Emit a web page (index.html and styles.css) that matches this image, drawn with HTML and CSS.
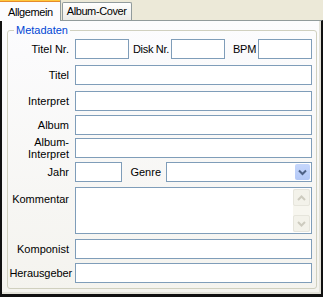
FILE: index.html
```html
<!DOCTYPE html>
<html lang="de">
<head>
  <meta charset="UTF-8" />
  <title>Tag-Editor</title>
  <link rel="stylesheet" href="styles.css">
</head>
<body>

<div class="tabs">
  <div class="tab active">Allgemein</div>
  <div class="tab">Album-Cover</div>
</div>

<div class="page">
  <fieldset class="group">
    <legend>Metadaten</legend>
    <div class="form">
      <div class="lbl">Titel Nr.</div>
      <div class="nums">
        <div class="field"></div>
        <div class="lbl">Disk Nr.</div>
        <div class="field"></div>
        <div class="lbl">BPM</div>
        <div class="field"></div>
      </div>

      <div class="lbl">Titel</div>
      <div class="field"></div>

      <div class="lbl">Interpret</div>
      <div class="field"></div>

      <div class="lbl">Album</div>
      <div class="field"></div>

      <div class="lbl two">Album-<br>Interpret</div>
      <div class="field"></div>

      <div class="lbl">Jahr</div>
      <div class="year-row">
        <div class="field year"></div>
        <div class="lbl">Genre</div>
        <div class="field select">
          <div class="drop">
            <svg width="9" height="7" viewBox="0 0 9 7"><polyline points="1,1.5 4.5,5 8,1.5" fill="none" stroke="#4d6185" stroke-width="2"/></svg>
          </div>
        </div>
      </div>

      <div class="lbl top">Kommentar</div>
      <div class="field memo">
        <div class="scroll">
          <div class="sbtn">
            <svg width="9" height="6" viewBox="0 0 9 6"><polyline points="1,5 4.5,1.5 8,5" fill="none" stroke="#cdcbbf" stroke-width="2"/></svg>
          </div>
          <div class="sbtn">
            <svg width="9" height="6" viewBox="0 0 9 6"><polyline points="1,1 4.5,4.5 8,1" fill="none" stroke="#cdcbbf" stroke-width="2"/></svg>
          </div>
        </div>
      </div>

      <div class="lbl">Komponist</div>
      <div class="field"></div>

      <div class="lbl wide">Herausgeber</div>
      <div class="field"></div>
    </div>
  </fieldset>
</div>

</body>
</html>
```

FILE: styles.css
```css
body {
  margin: 0;
  width: 323px;
  height: 297px;
  background: #ece9d8;
  font-family: "Liberation Sans", Arial, sans-serif;
  font-size: 11px;
  color: #000;
  overflow: hidden;
}

.tabs {
  display: flex;
  align-items: flex-end;
  height: 20px;
}

.tab {
  height: 17px;
  padding: 0 4px;
  margin-left: 1px;
  line-height: 17px;
  letter-spacing: -0.4px;
  border: 1px solid #919b9c;
  border-bottom: none;
  border-radius: 2px 2px 0 0;
  background: linear-gradient(#ffffff, #ecebe6);
}

.tab.active {
  height: 20px;
  margin: 0 0 -1px 0;
  padding: 0 7px 0 8px;
  line-height: 23px;
  border-top: 3px solid #ffc83c;
  border-left: none;
  background: #fcfcfe;
  position: relative;
  box-shadow: inset 0 1px 0 #e68b2c;
}

.page {
  height: 273px;
  border-top: 1px solid #919b9c;
  border-left: 2px solid #111;
  border-right: 2px solid #111;
  border-bottom: 3px solid #111;
  background: linear-gradient(#fcfcfe, #f4f3ee);
  box-shadow: inset -2px -2px 0 #e3e2d9;
}

.group {
  margin: 3px 4px 0 5px;
  padding: 2px 4px 5px 0;
  border: 1px solid #d0d0bf;
  border-radius: 3px;
}

.group legend {
  margin-left: 6px;
  padding: 0 2px;
  line-height: 13px;
  color: #0046d5;
}

.form {
  display: grid;
  grid-template-columns: 61px 237px;
  grid-template-rows: 26px 26px 24px 23px 24px 25px 52px 24px 20px;
  column-gap: 6px;
}

.lbl {
  height: 20px;
  display: flex;
  align-items: center;
  justify-content: flex-end;
  white-space: nowrap;
}

.lbl.two {
  height: 24px;
  margin-top: -2px;
  line-height: 12px;
  text-align: right;
}

.lbl.top {
  padding-top: 2px;
}

.lbl.wide {
  margin-right: -3px;
  letter-spacing: -0.1px;
}

.field {
  height: 18px;
  border: 1px solid #7f9db9;
  background: #fff;
}

.nums {
  display: grid;
  grid-template-columns: 54px 42px 54px 33px 54px;
}

.nums .lbl {
  padding-right: 2px;
  letter-spacing: -0.3px;
}

.year-row {
  display: grid;
  grid-template-columns: 47px 44px 1fr;
}

.year-row .lbl {
  padding-right: 5px;
}

.select {
  display: flex;
  justify-content: flex-end;
}

.drop {
  width: 15px;
  height: 16px;
  margin: 1px;
  border-radius: 2px;
  background: linear-gradient(#c6d7fc, #b3c8f6);
  display: flex;
  align-items: center;
  justify-content: center;
}

.memo {
  height: 45px;
  display: flex;
  justify-content: flex-end;
}

.scroll {
  width: 17px;
  margin: 1px 1px 1px 0;
  background: #f7f6ef;
  display: flex;
  flex-direction: column;
  justify-content: space-between;
}

.sbtn {
  height: 15px;
  border: 1px solid #e6e5dc;
  border-radius: 2px;
  background: #f3f2ea;
  display: flex;
  align-items: center;
  justify-content: center;
}
```
